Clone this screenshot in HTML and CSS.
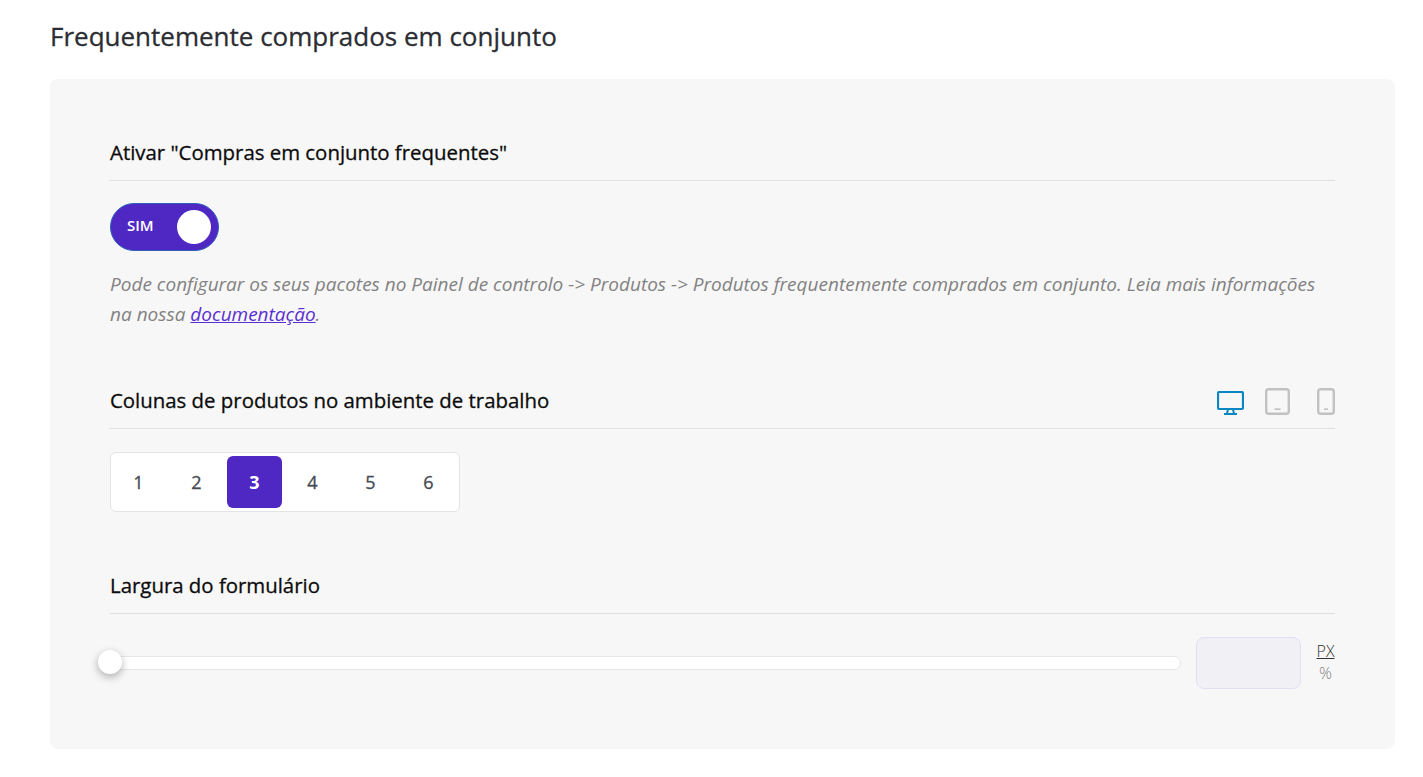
FILE: index.html
```html
<!DOCTYPE html>
<html lang="pt">
<head>
<meta charset="utf-8">
<title>Frequentemente comprados em conjunto</title>
<link rel="stylesheet" href="styles.css">
</head>
<body>
<main class="page">
  <h1 class="title">Frequentemente comprados em conjunto</h1>
  <section class="card">
    <div class="group first">
      <div class="head"><h2>Ativar "Compras em conjunto frequentes"</h2></div>
      <div class="toggle"><span class="toggle-label">SIM</span><span class="knob"></span></div>
      <p class="help">Pode configurar os seus pacotes no Painel de controlo -&gt; Produtos -&gt; Produtos frequentemente comprados em conjunto. Leia mais informações na nossa <a href="#">documentação</a>.</p>
    </div>
    <div class="group second">
      <div class="head">
        <h2>Colunas de produtos no ambiente de trabalho</h2>
        <div class="devices">
          <svg class="dev-desktop" width="27" height="24" viewBox="0 0 27 24" fill="none"><rect x="1" y="1" width="25" height="17" rx="1.5" stroke="#0a86c0" stroke-width="2.2"/><path d="M11 18.5 10 22.5M16 18.5 17 22.5" stroke="#0a86c0" stroke-width="2"/><path d="M7 23h13" stroke="#0a86c0" stroke-width="2"/></svg>
          <svg class="dev-tablet" width="25" height="27" viewBox="0 0 25 27" fill="none"><rect x="1.2" y="1.2" width="22.6" height="24.6" rx="2.5" stroke="#c2c2c2" stroke-width="2.4"/><path d="M9.5 21.2h6" stroke="#bfbfbf" stroke-width="1.6"/></svg>
          <svg class="dev-phone" width="18" height="27" viewBox="0 0 18 27" fill="none"><rect x="1.2" y="1.2" width="15.6" height="24.6" rx="2.5" stroke="#c2c2c2" stroke-width="2.4"/><path d="M7 21.2h4" stroke="#bfbfbf" stroke-width="1.6"/></svg>
        </div>
      </div>
      <div class="cols">
        <button class="col">1</button>
        <button class="col">2</button>
        <button class="col active">3</button>
        <button class="col">4</button>
        <button class="col">5</button>
        <button class="col">6</button>
      </div>
    </div>
    <div class="group third">
      <div class="head"><h2>Largura do formulário</h2></div>
      <div class="slider-row">
        <div class="track"><span class="thumb"></span></div>
        <div class="number"></div>
        <div class="units"><span class="unit on">PX</span><span class="unit">%</span></div>
      </div>
    </div>
  </section>
</main>
</body>
</html>
```
FILE: styles.css
```css
* { box-sizing: border-box; }
html, body { margin: 0; background: #fff; }
body { font-family: "Open Sans", "Noto Sans", sans-serif; color: #000; }
.page { padding: 0 28px 0 50px; }
.title { margin: 0; padding-top: 18px; height: 79px; font-size: 26px; line-height: 36px; font-weight: 500; color: #2b2d33; -webkit-text-stroke: .3px #2b2d33; }
.card { height: 670px; background: #f7f7f7; border-radius: 8px; padding: 0 60px; }
.group.first { padding-top: 56px; }
.group.second { padding-top: 54px; }
.group.third { padding-top: 56px; }
.head { display: flex; justify-content: space-between; align-items: flex-start; height: 46px; border-bottom: 1px solid #dfdfdf; }
.head h2 { margin: 0; font-size: 20.4px; line-height: 34px; font-weight: 500; color: #0b0b0b; -webkit-text-stroke: .3px #0b0b0b; }
.toggle { width: 109px; height: 48px; margin-top: 22px; background: #4f28c4; border: 1px solid #2f5fb8; border-radius: 24px; display: flex; align-items: center; justify-content: space-between; padding: 0 7px 0 16px; }
.toggle-label { color: #fff; font-size: 15px; line-height: 20px; font-weight: 600; margin-bottom: 4px; }
.knob { width: 34px; height: 34px; border-radius: 50%; background: #fff; }
.help { margin: 18px 0 0; font-size: 19px; line-height: 30px; font-style: italic; color: #828282; font-weight: 400; }
.help a { color: #5a2fd0; }
.devices { display: flex; align-items: flex-end; margin-top: 5px; }
.dev-desktop { margin-right: 21px; }
.dev-tablet { margin-right: 27px; }
.cols { margin-top: 23px; width: 350px; height: 60px; background: #fff; border: 1px solid #e4e4e4; border-radius: 6px; padding: 3px 0; display: flex; gap: 3px; }
.col { width: 55px; border: 0; background: none; font: 500 18px "Open Sans", sans-serif; color: #444a52; -webkit-text-stroke: .3px #444a52; border-radius: 6px; padding: 0; }
.col.active { background: #4f28c4; color: #fff; font-weight: 700; -webkit-text-stroke: 0; }
.slider-row { display: flex; align-items: center; margin-top: 23px; }
.track { position: relative; flex: 1; height: 14px; background: #fff; border: 1px solid #e6e6e6; border-radius: 7px; }
.thumb { position: absolute; left: -13px; top: -7px; width: 24px; height: 24px; border-radius: 50%; background: #fff; box-shadow: 0 3px 8px rgba(0,0,0,.3); }
.number { width: 105px; height: 52px; margin-left: 15px; background: #f1f1f5; border: 1px solid #e2dff5; border-radius: 8px; }
.units { width: 34px; margin-bottom: 2px; display: flex; flex-direction: column; align-items: flex-end; font-size: 16px; line-height: 22px; font-weight: 300; }
.unit { color: #808080; width: 19px; text-align: center; }
.unit.on { color: #333; text-decoration: underline; }
```
